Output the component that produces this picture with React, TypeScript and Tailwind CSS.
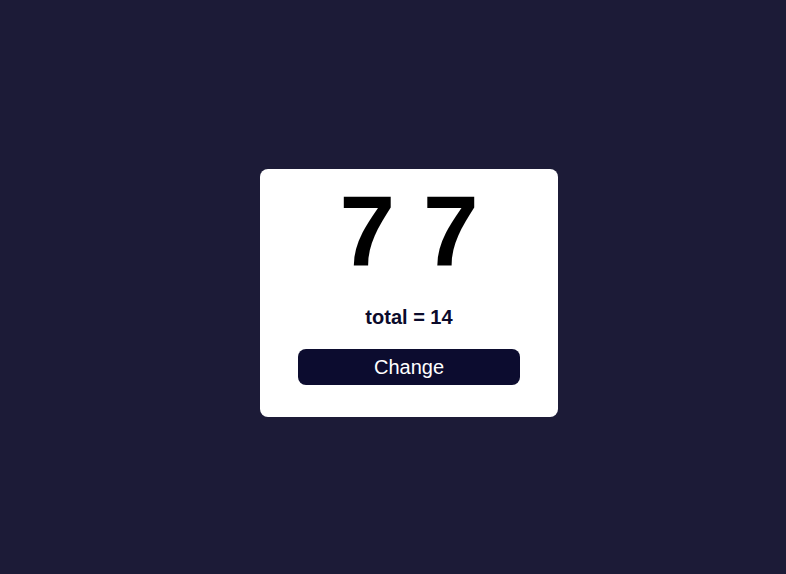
export default function App() {
  return (
    <main className="min-h-screen bg-[#1c1b37] flex items-center justify-center pl-[32px] pt-[12px] font-['Liberation_Sans',Arial,sans-serif]">
      <div className="w-[298px] h-[248px] bg-white rounded-[8px] flex flex-col items-center pt-[6px]">
        <div className="text-[100px] leading-[112px] font-bold text-black">7 7</div>

        <p className="mt-[19px] text-[20px] leading-[22px] font-bold text-[#0b0b2b]">total = 14</p>

        <button className="mt-[21px] w-[222px] h-[36px] rounded-[8px] bg-[#0c0c2f] text-white text-[20px] leading-[22px]">
          Change
        </button>
      </div>
    </main>
  );
}
